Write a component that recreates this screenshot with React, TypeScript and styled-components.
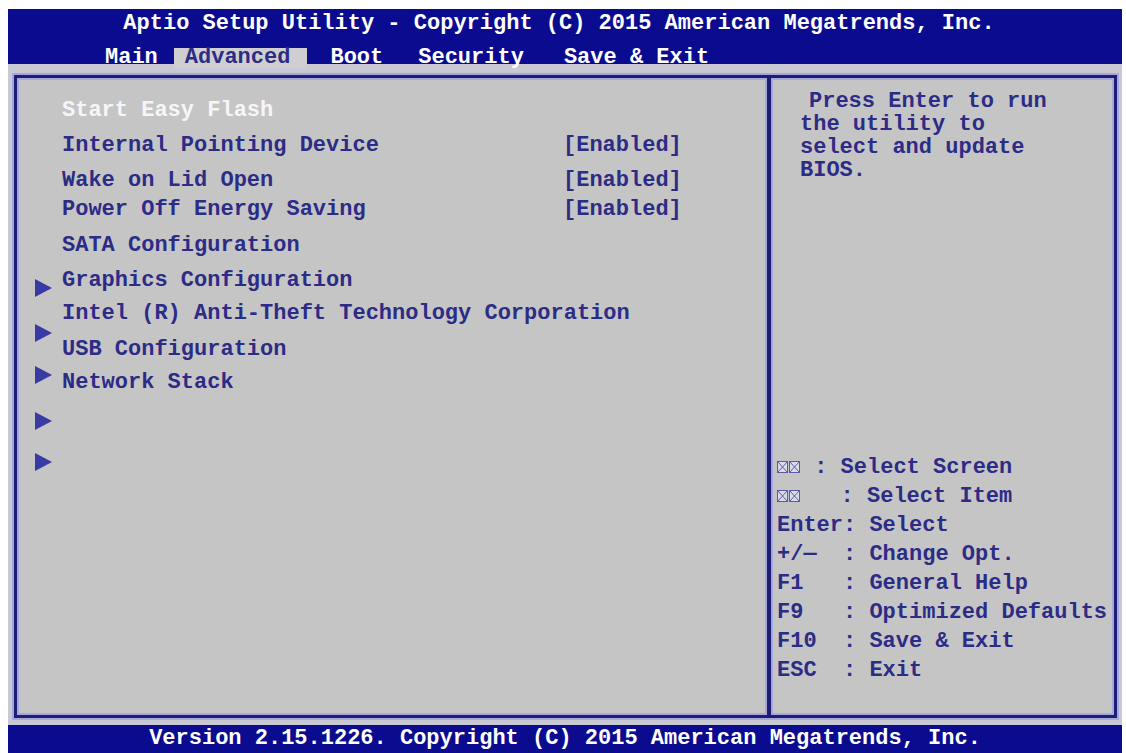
import React from "react";
import styled, { createGlobalStyle } from "styled-components";

const Global = createGlobalStyle`
  html, body { margin: 0; padding: 0; background: #ffffff; }
  body { font-family: "Liberation Mono", "Courier New", monospace; }
`;

const NAVY = "#0b0b8f";
const TEXT = "#2c2c86";
const LINE = "#1d1d72";
const HALO = "#a6a6de";

const Screen = styled.div`
  margin: 9px 4px 0 8px;
  width: 1114px;
  height: 744px;
  display: flex;
  flex-direction: column;
  font-family: "Liberation Mono", "Courier New", monospace;
  font-weight: bold;
  font-size: 22px;
`;

const Header = styled.header`
  flex: none;
  height: 55px;
  background: ${NAVY};
  color: #ffffff;
  display: flex;
  flex-direction: column;
`;

const Title = styled.div`
  padding: 1px 12px 0 0;
  line-height: 28px;
  text-align: center;
  white-space: pre;
`;

const TabRow = styled.nav`
  margin-top: 10px;
  padding-left: 97px;
  display: flex;
  align-items: flex-start;
`;

const Tab = styled.div<{ $ml: number; $active?: boolean }>`
  position: relative;
  z-index: 1;
  margin-left: ${(p) => p.$ml}px;
  height: 20px;
  line-height: 19px;
  white-space: pre;
  color: ${(p) => (p.$active ? TEXT : "#ffffff")};
  background: ${(p) => (p.$active ? "#cfcfd2" : "transparent")};
  padding: ${(p) => (p.$active ? "0 17px 0 11px" : "0")};
`;

const Body = styled.main`
  flex: 1;
  background: #c9c9d3;
  padding: 11px 5px 7px 6px;
  display: flex;
`;

const Frame = styled.section`
  flex: 1;
  display: flex;
  background: #c5c5c5;
  border: 3px solid ${LINE};
  box-shadow: 0 0 0 2px ${HALO}, inset 0 0 0 2px ${HALO};
`;

const LeftPanel = styled.div`
  flex: none;
  width: 750px;
  display: flex;
`;

const ArrowColumn = styled.div`
  flex: none;
  width: 45px;
  padding-left: 18px;
  box-sizing: border-box;
  display: flex;
  flex-direction: column;
`;

const ArrowBox = styled.svg<{ $mt: number }>`
  display: block;
  flex: none;
  margin-top: ${(p) => p.$mt}px;
`;

const ItemList = styled.div`
  padding-top: 18px;
  display: flex;
  flex-direction: column;
`;

const Row = styled.div<{ $h: number; $selected?: boolean }>`
  height: ${(p) => p.$h}px;
  line-height: 30px;
  display: grid;
  grid-template-columns: 501px auto;
  white-space: pre;
  color: ${(p) => (p.$selected ? "#f6f6f8" : TEXT)};
`;

const Divider = styled.div`
  flex: none;
  width: 4px;
  background: ${LINE};
  box-shadow: -2px 0 0 ${HALO}, 2px 0 0 ${HALO};
`;

const RightPanel = styled.aside`
  flex: 1;
  display: flex;
  flex-direction: column;
  justify-content: space-between;
  padding: 12px 0 30px 6px;
  color: ${TEXT};
`;

const Help = styled.div`
  padding-left: 23px;
  line-height: 23px;
`;

const HelpLine = styled.div<{ $indent?: number }>`
  padding-left: ${(p) => p.$indent ?? 0}px;
  white-space: pre;
`;

const Keys = styled.div`
  display: flex;
  flex-direction: column;
`;

const KeyLine = styled.div`
  line-height: 29px;
  white-space: pre;
`;

const KeyIconSvg = styled.svg`
  vertical-align: 0;
`;

const Footer = styled.footer`
  flex: none;
  height: 28px;
  line-height: 28px;
  background: ${NAVY};
  color: #ffffff;
  text-align: center;
  white-space: pre;
`;

const tabs = [
  { label: "Main", ml: 0 },
  { label: "Advanced", ml: 16, active: true },
  { label: "Boot", ml: 23 },
  { label: "Security", ml: 35 },
  { label: "Save & Exit", ml: 40 },
];

const rows: { name: string; value?: string; h: number; selected?: boolean }[] = [
  { name: "Start Easy Flash", h: 35, selected: true },
  { name: "Internal Pointing Device", value: "[Enabled]", h: 35 },
  { name: "Wake on Lid Open", value: "[Enabled]", h: 29 },
  { name: "Power Off Energy Saving", value: "[Enabled]", h: 36 },
  { name: "SATA Configuration", h: 35 },
  { name: "Graphics Configuration", h: 33 },
  { name: "Intel (R) Anti-Theft Technology Corporation", h: 36 },
  { name: "USB Configuration", h: 33 },
  { name: "Network Stack", h: 34 },
];

const arrowGaps = [201, 27, 24, 28, 23];

const Arrow = ({ mt }: { mt: number }) => (
  <ArrowBox $mt={mt} width="17" height="18" viewBox="0 0 17 18">
    <polygon points="0,0 17,9 0,18" fill="#3a3aa4" />
  </ArrowBox>
);

const KeyIcon = () => (
  <KeyIconSvg width="24" height="12" viewBox="0 0 24 12">
    {[0.5, 12.5].map((x) => (
      <g key={x} stroke="#5a5aa8" strokeWidth="1" fill="none">
        <rect x={x} y="0.5" width="10" height="11" fill="#dcdce8" />
        <line x1={x} y1="0.5" x2={x + 10} y2="11.5" />
        <line x1={x + 10} y1="0.5" x2={x} y2="11.5" />
      </g>
    ))}
  </KeyIconSvg>
);

const keyLines = [
  "Enter: Select",
  "+/—  : Change Opt.",
  "F1   : General Help",
  "F9   : Optimized Defaults",
  "F10  : Save & Exit",
  "ESC  : Exit",
];

export default function App() {
  return (
    <>
      <Global />
      <Screen>
        <Header>
          <Title>Aptio Setup Utility - Copyright (C) 2015 American Megatrends, Inc.</Title>
          <TabRow>
            {tabs.map((t) => (
              <Tab key={t.label} $ml={t.ml} $active={t.active}>
                {t.label}
              </Tab>
            ))}
          </TabRow>
        </Header>
        <Body>
          <Frame>
            <LeftPanel>
              <ArrowColumn>
                {arrowGaps.map((g, i) => (
                  <Arrow key={i} mt={g} />
                ))}
              </ArrowColumn>
              <ItemList>
                {rows.map((r) => (
                  <Row key={r.name} $h={r.h} $selected={r.selected}>
                    <span>{r.name}</span>
                    <span>{r.value ?? ""}</span>
                  </Row>
                ))}
              </ItemList>
            </LeftPanel>
            <Divider />
            <RightPanel>
              <Help>
                <HelpLine $indent={9}>Press Enter to run</HelpLine>
                <HelpLine>the utility to</HelpLine>
                <HelpLine>select and update</HelpLine>
                <HelpLine>BIOS.</HelpLine>
              </Help>
              <Keys>
                <KeyLine>
                  <KeyIcon />
                  {" : Select Screen"}
                </KeyLine>
                <KeyLine>
                  <KeyIcon />
                  {"   : Select Item"}
                </KeyLine>
                {keyLines.map((k) => (
                  <KeyLine key={k}>{k}</KeyLine>
                ))}
              </Keys>
            </RightPanel>
          </Frame>
        </Body>
        <Footer>Version 2.15.1226. Copyright (C) 2015 American Megatrends, Inc.</Footer>
      </Screen>
    </>
  );
}
